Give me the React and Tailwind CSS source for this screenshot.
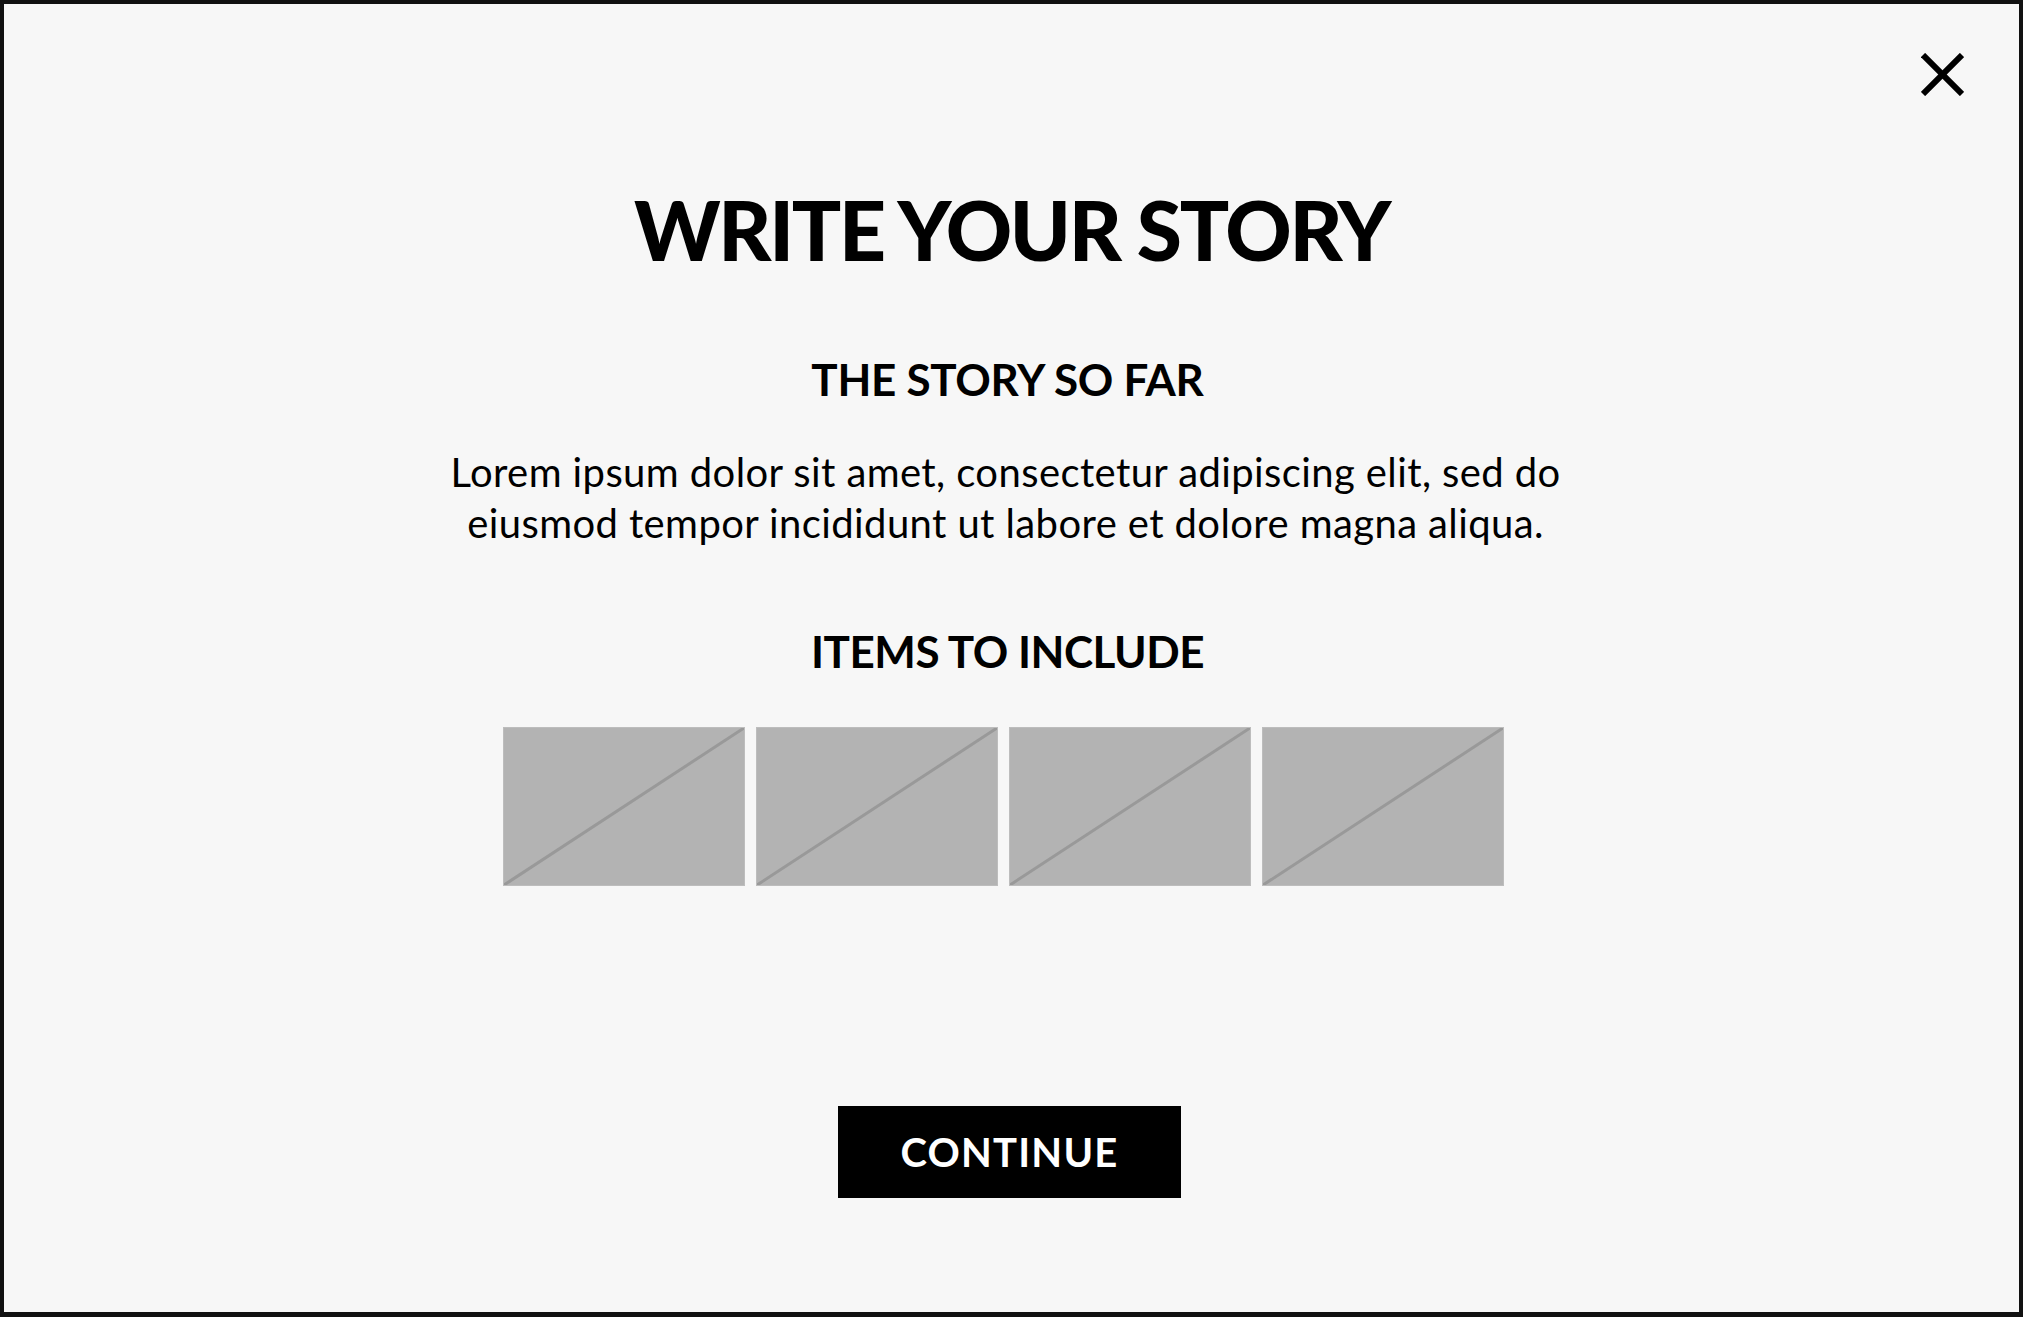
import React from "react";

function Placeholder() {
  return (
    <div className="relative h-[159px] w-[242px] border border-[#bdbdbd] bg-[#b3b3b3]">
      <svg
        className="absolute inset-0 h-full w-full"
        viewBox="0 0 100 100"
        preserveAspectRatio="none"
      >
        <line
          x1="0"
          y1="100"
          x2="100"
          y2="0"
          stroke="#999999"
          strokeWidth="3"
          vectorEffect="non-scaling-stroke"
        />
      </svg>
    </div>
  );
}

export default function App() {
  return (
    <div className="relative flex h-screen w-full flex-col items-center border-4 border-b-[5px] border-[#111111] bg-[#f7f7f7] pt-[184px] font-['Lato','Liberation_Sans',sans-serif] text-black">
      {/* Close */}
      <button className="absolute right-[55px] top-[49px] h-[43px] w-[43px] p-0">
        <svg viewBox="0 0 43 43" className="h-full w-full">
          <line x1="2" y1="2" x2="41" y2="41" stroke="#000" strokeWidth="6" />
          <line x1="41" y1="2" x2="2" y2="41" stroke="#000" strokeWidth="6" />
        </svg>
      </button>

      <h1 className="text-[82px] font-black leading-none tracking-[-2.3px]">
        WRITE YOUR STORY
      </h1>

      <h2 className="mr-[8px] mt-[87px] text-[44px] font-bold leading-none tracking-[-0.3px]">
        THE STORY SO FAR
      </h2>

      <p className="mr-[12px] mt-[46px] text-center text-[40px] leading-[51px] tracking-[0.4px]">
        Lorem ipsum dolor sit amet, consectetur adipiscing elit, sed do
        <br />
        eiusmod tempor incididunt ut labore et dolore magna aliqua.
      </p>

      <h2 className="mr-[8px] mt-[80px] text-[44px] font-bold leading-none tracking-[-0.5px]">
        ITEMS TO INCLUDE
      </h2>

      <div className="mr-4 mt-[54px] flex gap-[11px]">
        <Placeholder />
        <Placeholder />
        <Placeholder />
        <Placeholder />
      </div>

      <button className="mr-[4px] mt-[220px] flex h-[92px] w-[343px] items-center justify-center bg-black text-[40px] font-bold tracking-[1.2px] text-white">
        CONTINUE
      </button>
    </div>
  );
}
